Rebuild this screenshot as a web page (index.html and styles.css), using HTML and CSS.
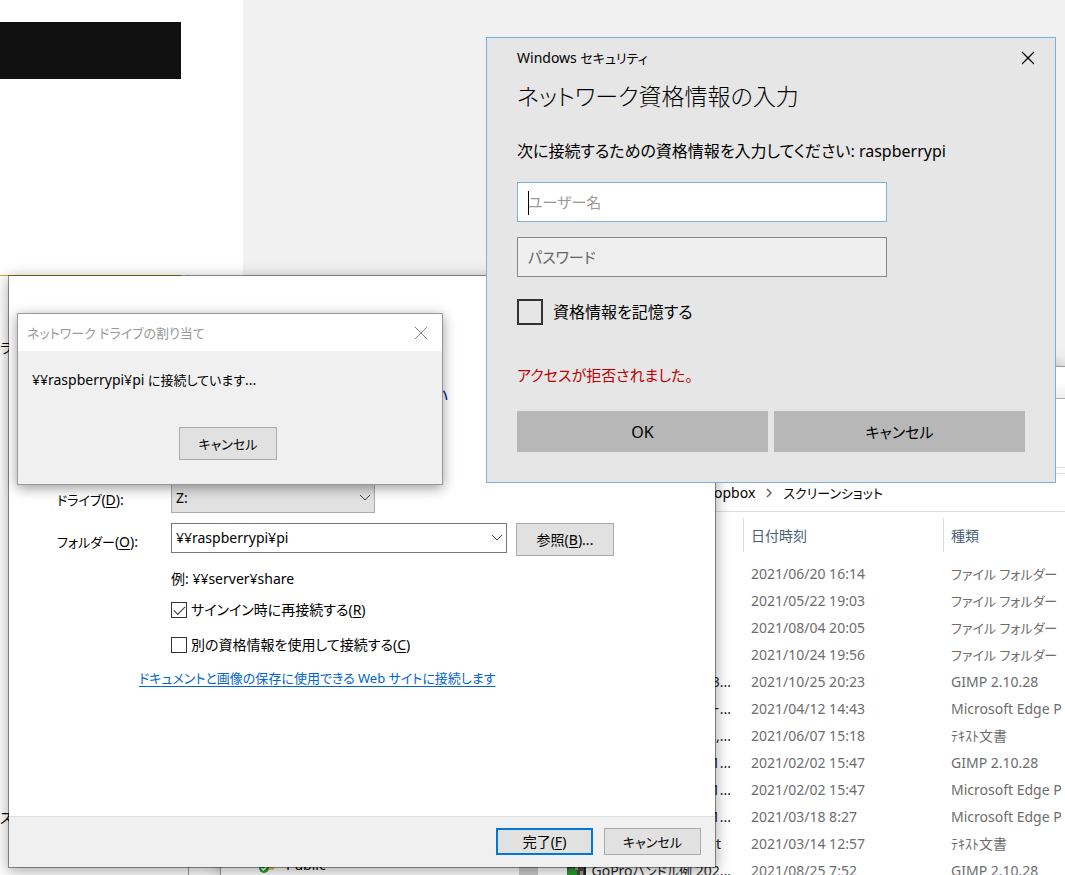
FILE: index.html
```html
<!DOCTYPE html>
<html lang="ja">
<head>
<meta charset="utf-8">
<meta name="viewport" content="width=device-width, initial-scale=1">
<title>Windows セキュリティ</title>
<link rel="stylesheet" href="styles.css">
</head>
<body>
<main class="desktop">
  <div class="page-column"><div class="banner"></div></div>
  <div class="side-window"><span>ラ</span><span>ス</span></div>

  <section class="explorer" aria-label="スクリーンショット">
    <div class="explorer-title"></div>
    <div class="explorer-ribbon"></div>
    <nav class="breadcrumb">
      <span>opbox</span>
      <svg width="8" height="10" viewBox="0 0 8 10"><path d="M2 1l4 4-4 4" fill="none" stroke="#666" stroke-width="1.5"/></svg>
      <span class="kana">スクリーンショット</span>
    </nav>
    <div class="explorer-body">
      <div class="tree">
        <div class="tree-item">
          <svg width="18" height="18" viewBox="0 0 18 18"><path d="M5 1h11v13H5z" fill="#ecc968"/><circle cx="6" cy="12" r="5" fill="#2c9a35"/><path d="M3.500 12l2 2 3.500-4" fill="none" stroke="#fff" stroke-width="1.500"/></svg>
          <span>Public</span>
        </div>
      </div>
      <div class="scrollbar"></div>
      <table class="files">
        <thead>
          <tr><th class="name"></th><th>日付時刻</th><th>種類</th></tr>
        </thead>
        <tbody>
          <tr><td class="name"></td><td>2021/06/20 16:14</td><td class="kana">ファイル フォルダー</td></tr>
          <tr><td class="name"></td><td>2021/05/22 19:03</td><td class="kana">ファイル フォルダー</td></tr>
          <tr><td class="name"></td><td>2021/08/04 20:05</td><td class="kana">ファイル フォルダー</td></tr>
          <tr><td class="name"></td><td>2021/10/24 19:56</td><td class="kana">ファイル フォルダー</td></tr>
          <tr><td class="name">3...</td><td>2021/10/25 20:23</td><td>GIMP 2.10.28</td></tr>
          <tr><td class="name">ー...</td><td>2021/04/12 14:43</td><td>Microsoft Edge P</td></tr>
          <tr><td class="name">,...</td><td>2021/06/07 15:18</td><td>ﾃｷｽﾄ文書</td></tr>
          <tr><td class="name">1...</td><td>2021/02/02 15:47</td><td>GIMP 2.10.28</td></tr>
          <tr><td class="name">1...</td><td>2021/02/02 15:47</td><td>Microsoft Edge P</td></tr>
          <tr><td class="name">1...</td><td>2021/03/18 8:27</td><td>Microsoft Edge P</td></tr>
          <tr><td class="name short">t</td><td>2021/03/14 12:57</td><td>ﾃｷｽﾄ文書</td></tr>
          <tr><td class="name"><div class="file"><svg width="19" height="18" viewBox="0 0 19 18"><path d="M0 0h19v18H0z" fill="#4a4d45"/><path d="M8 4h3v4H8zM13 9h3v4h-3z" fill="#a39a8c"/><path d="M17 0h2v18h-2z" fill="#222"/><circle cx="5" cy="11" r="5" fill="#2c9a35"/></svg><span>GoPro<span class="kana">ハンドル例</span> 202...</span></div></td><td>2021/08/25 7:52</td><td>GIMP 2.10.28</td></tr>
        </tbody>
      </table>
    </div>
  </section>

  <section class="wizard" aria-label="ネットワーク ドライブ">
    <div class="wizard-body">
      <h2 class="wizard-heading">い</h2>
      <form class="wizard-form">
        <label for="drive"><span class="kana">ドライブ</span>(<u>D</u>):</label>
        <div class="combo drive">
          <select id="drive"><option>Z:</option></select>
          <svg width="12" height="8" viewBox="0 0 12 8"><path d="M1 1l5 5 5-5" fill="none" stroke="#444"/></svg>
        </div>
        <label for="folder"><span class="kana">フォルダー</span>(<u>O</u>):</label>
        <div class="folder-row">
          <div class="combo folder">
            <select id="folder"><option>¥¥raspberrypi¥pi</option></select>
            <svg width="12" height="8" viewBox="0 0 12 8"><path d="M1 1l5 5 5-5" fill="none" stroke="#444"/></svg>
          </div>
          <button type="button" class="button tall">参照(<u>B</u>)...</button>
        </div>
        <p class="example">例: ¥¥server¥share</p>
        <div class="option">
          <input type="checkbox" id="reconnect" checked>
          <label for="reconnect">サインイン時に再接続する(<u>R</u>)</label>
        </div>
        <div class="option last">
          <input type="checkbox" id="other">
          <label for="other">別の資格情報を使用して接続する(<u>C</u>)</label>
        </div>
      </form>
      <a class="site-link" href="#">ドキュメントと画像の保存に使用できる Web サイトに接続します</a>
    </div>
    <footer class="wizard-footer">
      <button type="button" class="button primary">完了(<u>F</u>)</button>
      <button type="button" class="button"><span class="kana">キャンセル</span></button>
    </footer>
  </section>

  <section class="progress" role="dialog" aria-labelledby="progress-title">
    <header class="progress-title">
      <h2 id="progress-title">ネットワーク ドライブの割り当て</h2>
      <button type="button" class="close" aria-label="閉じる"><svg width="14" height="14" viewBox="0 0 14 14"><path d="M1 1l12 12M13 1L1 13" fill="none" stroke="#888"/></svg></button>
    </header>
    <p>¥¥raspberrypi¥pi <span class="kana">に接続しています</span>...</p>
    <button type="button" class="button tall"><span class="kana">キャンセル</span></button>
  </section>

  <section class="security" role="dialog" aria-labelledby="security-title">
    <header class="security-bar">
      <span>Windows <span class="kana">セキュリティ</span></span>
      <button type="button" class="close" aria-label="閉じる"><svg width="14" height="14" viewBox="0 0 14 14"><path d="M1 1l12 12M13 1L1 13" fill="none" stroke="#000" stroke-width="1.200"/></svg></button>
    </header>
    <h1 id="security-title">ネットワーク資格情報の入力</h1>
    <p class="prompt">次に接続するための資格情報を入力してください: raspberrypi</p>
    <div class="field user"><input type="text" aria-label="ユーザー名" placeholder="ユーザー名"><i class="caret"></i></div>
    <div class="field"><input type="password" aria-label="パスワード" placeholder="パスワード"></div>
    <div class="remember">
      <input type="checkbox" id="remember">
      <label for="remember">資格情報を記憶する</label>
    </div>
    <p class="error">アクセスが拒否されました。</p>
    <div class="actions">
      <button type="button">OK</button>
      <button type="button"><span class="kana">キャンセル</span></button>
    </div>
  </section>
</main>
</body>
</html>
```
FILE: styles.css
```css
* {
  box-sizing: border-box;
}

body {
  margin: 0;
  font: 14px/20px "Noto Sans", "Noto Sans CJK JP", sans-serif;
  font-feature-settings: "palt";
  color: #000;
}

h1, h2, p {
  margin: 0;
  font-weight: 400;
}

button, input, select {
  margin: 0;
  font: inherit;
  font-feature-settings: inherit;
  color: inherit;
}

svg {
  display: block;
  flex: none;
}

u {
  text-underline-offset: 2px;
}

.kana {
  font-size: 13px;
}

.desktop {
  position: relative;
  height: 100vh;
  overflow: hidden;
  background: #f1f1f1;
}

.page-column {
  width: 243px;
  height: 100%;
  padding-top: 22px;
  background: #fff;
}

.banner {
  width: 181px;
  height: 57px;
  background: #111;
}

/* Windows on the desktop, from back to front */
.side-window {
  position: absolute;
  top: 275px;
  bottom: 0;
  left: 0;
  width: 189px;
  padding: 63px 0 47px;
  display: flex;
  flex-direction: column;
  justify-content: space-between;
  border-right: 1px solid #999;
  background: linear-gradient(#d9a520, #d9a520) 0 0 / 181px 1px no-repeat #fff;
}

.explorer {
  position: absolute;
  top: 366px;
  right: 0;
  bottom: 0;
  left: 220px;
  display: flex;
  flex-direction: column;
  border: solid #999;
  border-width: 1px 0 0 1px;
  background: #fff;
  box-shadow: 0 0 16px rgba(0, 0, 0, .3);
}

.explorer-title {
  height: 32px;
  border-bottom: 1px solid #aaa;
  background: linear-gradient(#fff 50%, #eee);
}

.explorer-ribbon {
  height: 75px;
  border-bottom: 1px solid #ddd;
  background: linear-gradient(#fff 68px, #ddd 68px, #ddd 69px, #fff 69px);
}

.breadcrumb {
  height: 38px;
  padding-left: 493px;
  display: flex;
  align-items: center;
  gap: 10px;
  border-bottom: 1px solid #ddd;
}

.explorer-body {
  flex: 1;
  min-height: 0;
  display: flex;
  overflow: hidden;
}

.tree {
  flex: none;
  width: 298px;
  padding: 343px 0 0 37px;
}

.tree-item {
  display: flex;
  align-items: center;
  gap: 10px;
}

.scrollbar {
  flex: none;
  width: 19px;
  margin-right: 29px;
  background: #cdcdcd;
}

.files {
  width: 100%;
  align-self: flex-start;
  table-layout: fixed;
  border-collapse: collapse;
  white-space: nowrap;
  color: #6d6d6d;
}

.files th {
  height: 48px;
  padding: 0 8px;
  text-align: left;
  font-weight: 400;
  color: #4c607a;
  background: linear-gradient(#ddd, #ddd) 0 6px / 1px 34px no-repeat;
}

.files th.name {
  width: 176px;
  background: none;
}

.files th:nth-child(2) {
  width: 200px;
}

.files td {
  height: 27px;
  padding: 0 0 0 8px;
}

.files .name {
  padding: 0 12px 0 0;
  text-align: right;
  color: #222;
}

.files .short {
  padding-right: 22px;
}

.file {
  display: flex;
  align-items: center;
  justify-content: space-between;
}

.wizard {
  position: absolute;
  top: 275px;
  left: 8px;
  width: 708px;
  border: 1px solid rgba(0, 0, 0, .4);
  background: #fff;
  background-clip: padding-box;
  box-shadow: 0 3px 14px rgba(0, 0, 0, .35);
}

.wizard-body {
  padding: 108px 0 128px 48px;
}

.wizard-heading {
  padding-left: 374px;
  font-size: 18px;
  line-height: 24px;
  color: #039;
}

.wizard-form {
  margin-top: 75px;
  display: grid;
  grid-template-columns: 114px 1fr;
  align-items: center;
  row-gap: 10px;
}

.wizard-form > label {
  padding-top: 4px;
}

.combo {
  position: relative;
}

.combo select {
  display: block;
  width: 100%;
  height: 30px;
  padding: 0 4px;
  appearance: none;
  border: 1px solid #777;
  border-radius: 0;
  background: #fff;
}

.combo svg {
  position: absolute;
  top: 11px;
  right: 4px;
  pointer-events: none;
}

.combo.drive {
  width: 204px;
}

.combo.drive select {
  border-color: #aaa;
  background: #e1e1e1;
}

.folder {
  width: 336px;
}

.folder-row {
  display: flex;
  gap: 9px;
}

.button {
  width: 97px;
  height: 27px;
  padding: 0;
  border: 1px solid #aaa;
  background: #e1e1e1;
}

.button.tall {
  width: 98px;
  height: 33px;
}

.button.primary {
  border: 2px solid #0078d7;
}

.example, .option {
  grid-column: 2;
}

.example {
  padding: 3px 0 1px;
}

.option {
  display: flex;
  align-items: center;
  gap: 4px;
}

.option.last {
  margin-top: 5px;
}

.option input {
  appearance: none;
  width: 16px;
  height: 16px;
  border: 1px solid #333;
  background: #fff;
}

.option input:checked::before {
  content: "";
  display: block;
  width: 10px;
  height: 5px;
  margin: 3px 2px;
  border: solid #333;
  border-width: 0 0 1px 1px;
  transform: rotate(-45deg);
}

.site-link {
  display: block;
  width: fit-content;
  margin: 13px 0 0 82px;
  font-size: 13px;
  color: #0066cc;
  text-underline-offset: 3px;
}

.wizard-footer {
  padding: 11px 14px 12px;
  display: flex;
  justify-content: flex-end;
  gap: 11px;
  border-top: 1px solid #dfdfdf;
  background: #f0f0f0;
}

.progress {
  position: absolute;
  top: 313px;
  left: 17px;
  width: 426px;
  padding-bottom: 24px;
  display: flex;
  flex-direction: column;
  border: 1px solid #999;
  background: #f0f0f0;
  box-shadow: 0 3px 12px rgba(0, 0, 0, .4);
}

.progress-title {
  height: 37px;
  padding: 0 14px 0 9px;
  display: flex;
  align-items: center;
  justify-content: space-between;
  background: #fff;
}

.progress-title h2 {
  font-size: 13px;
  color: #999;
}

.progress p {
  padding: 19px 14px 37px;
}

.progress > .button {
  align-self: center;
  margin-right: 4px;
}

.close {
  padding: 0;
  border: 0;
  background: none;
}

.security {
  position: absolute;
  top: 37px;
  right: 9px;
  left: 486px;
  padding: 10px 30px 30px;
  border: 1px solid #7cb0df;
  background: #e6e6e6;
  font-size: 16px;
  line-height: 24px;
}

.security-bar {
  display: flex;
  align-items: center;
  justify-content: space-between;
  margin-right: -10px;
  font-size: 14px;
  line-height: 20px;
}

.security h1 {
  margin-top: 12px;
  font-size: 23px;
  font-weight: 300;
  line-height: 32px;
}

.prompt {
  margin: 27px 0 19px;
}

.field {
  position: relative;
  width: 370px;
  margin-bottom: 15px;
}

.field input {
  display: block;
  width: 100%;
  height: 40px;
  padding: 0 10px;
  border: 1px solid #888;
  border-radius: 0;
  outline: 0;
  background: #efefef;
  font-size: 15px;
}

.field.user input {
  border-color: #7cb0df;
  background: #fff;
}

.field ::placeholder {
  color: #666;
  opacity: 1;
}

.field.user ::placeholder {
  color: #999;
}

.caret {
  position: absolute;
  top: 9px;
  left: 11px;
  width: 1px;
  height: 24px;
  background: #000;
}

.remember {
  margin-top: 22px;
  display: flex;
  align-items: center;
  gap: 10px;
}

.remember input {
  appearance: none;
  width: 26px;
  height: 26px;
  border: 2px solid #333;
}

.error {
  margin: 38px 0 24px;
  font-size: 15px;
  color: #c00000;
}

.actions {
  display: grid;
  grid-template-columns: 1fr 1fr;
  gap: 6px;
}

.actions button {
  height: 41px;
  border: 0;
  background: #b7b7b7;
}

.actions .kana {
  font-size: 15px;
}
```
